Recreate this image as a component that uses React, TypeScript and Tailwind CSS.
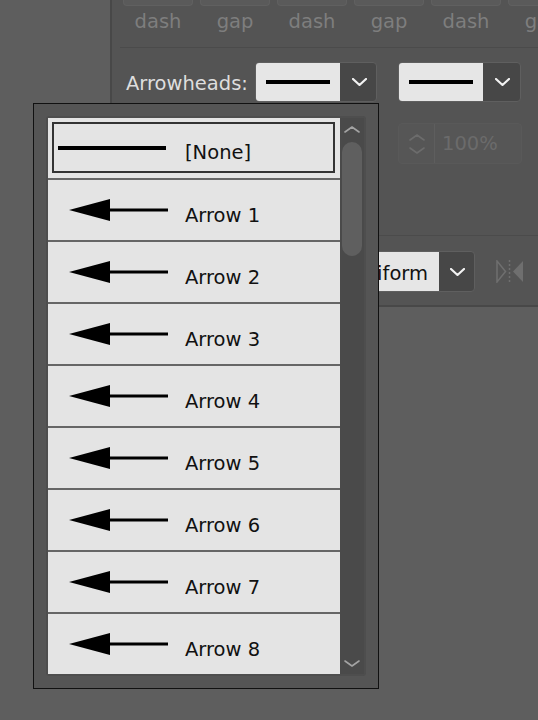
const labels = ["dash", "gap", "dash", "gap", "dash", "gap"];
const arrows = ["Arrow 1", "Arrow 2", "Arrow 3", "Arrow 4", "Arrow 5", "Arrow 6", "Arrow 7", "Arrow 8"];

function Chevron({ color, width = 16, height = 7, stroke = 2 }: { color: string; width?: number; height?: number; stroke?: number }) {
  return (
    <svg width={width} height={height} viewBox={`0 0 ${width} ${height}`}>
      <polyline
        points={`1,1 ${width / 2},${height - 1} ${width - 1},1`}
        fill="none"
        stroke={color}
        strokeWidth={stroke}
        strokeLinecap="round"
        strokeLinejoin="round"
      />
    </svg>
  );
}

function ChevronUp({ color }: { color: string }) {
  return (
    <svg width={16} height={7} viewBox="0 0 16 7">
      <polyline points="1,6 8,1 15,6" fill="none" stroke={color} strokeWidth={1.6} strokeLinecap="round" strokeLinejoin="round" />
    </svg>
  );
}

function LineSwatch({ width }: { width: number }) {
  return (
    <svg width={width} height={6} viewBox={`0 0 ${width} 6`}>
      <rect x={0} y={1} width={width} height={4} fill="#000" />
    </svg>
  );
}

function ArrowSwatch() {
  return (
    <svg width={100} height={24} viewBox="0 0 100 24" className="shrink-0">
      <polygon points="1,12 42,1 42,23" fill="#000" />
      <line x1={40} y1={12} x2={100} y2={12} stroke="#000" strokeWidth={3} />
    </svg>
  );
}

function Dropdown({ w }: { w: string }) {
  return (
    <div className={`${w} h-[40px] flex rounded-[4px] border border-[#5f5f5f] bg-[#474747] overflow-hidden`}>
      <div className="w-[84px] h-full bg-[#e6e6e6] flex items-center justify-center">
        <LineSwatch width={64} />
      </div>
      <div className="flex-1 flex items-center justify-center ml-[2px]">
        <Chevron color="#f2f2f2" width={15} height={8} stroke={2.2} />
      </div>
    </div>
  );
}

function MirrorIcon() {
  return (
    <svg width={28} height={23} viewBox="0 0 28 23">
      <polygon points="1,1 9.5,11.5 1,22" fill="none" stroke="#6f6f6f" strokeWidth={1.5} />
      <line x1={13.5} y1={0} x2={13.5} y2={23} stroke="#6f6f6f" strokeWidth={1.5} strokeDasharray="2 2" />
      <polygon points="27,1 17,11.5 27,22" fill="#6f6f6f" />
    </svg>
  );
}

export default function App() {
  return (
    <div className="relative w-[538px] h-[720px] overflow-hidden bg-[#5e5e5e] font-['DejaVu_Sans',Verdana,sans-serif]">
      {/* stroke panel behind */}
      <div className="ml-[110px] h-[307px] border-l-2 border-b-2 border-[#484848] bg-[#545454] pl-[11px] overflow-hidden">
        <div className="flex gap-[7px]">
          {labels.map((l, i) => (
            <div key={i} className="w-[70px] shrink-0 flex flex-col items-center">
              <div className="w-full h-[6px] rounded-b-[4px] border border-t-0 border-[#606060] bg-[#5a5a5a]" />
              <span className="mt-[4px] text-[19.5px] leading-[24px] text-[#7e7e7e]">{l}</span>
            </div>
          ))}
        </div>
        <div className="mt-[13px] -ml-[3px] h-px bg-[#4b4b4b]" />
        <div className="mt-[14px] flex items-center h-[40px] pl-[3px]">
          <span className="w-[129px] shrink-0 pt-[4px] text-[19.5px] leading-[24px] text-[#dedede]">Arrowheads:</span>
          <Dropdown w="w-[122px] shrink-0" />
          <div className="ml-[21px] shrink-0">
            <Dropdown w="w-[123px]" />
          </div>
        </div>
        <div className="mt-[21px] ml-[275px] w-[124px] h-[41px] flex rounded-[4px] border border-[#595959] bg-[#565656]">
          <div className="w-[36px] flex flex-col items-center justify-center gap-[6px] border-r border-[#5e5e5e]">
            <ChevronUp color="#6c6c6c" />
            <Chevron color="#6c6c6c" stroke={1.6} />
          </div>
          <span className="pl-[7px] flex items-center text-[19.5px] leading-[24px] text-[#6b6b6b]">100%</span>
        </div>
        <div className="mt-[71px] -ml-[3px] h-px bg-[#4b4b4b]" />
        <div className="mt-[15px] flex items-center">
          <div className="ml-[220px] w-[132px] h-[41px] shrink-0 flex rounded-[4px] border border-[#5f5f5f] bg-[#474747] overflow-hidden">
            <div className="w-[95px] h-full bg-[#e6e6e6] flex items-center justify-end pr-[11px]">
              <span className="pt-[4px] text-[19.5px] leading-[24px] text-[#111] whitespace-nowrap">Uniform</span>
            </div>
            <div className="flex-1 flex items-center justify-center ml-[2px]">
              <Chevron color="#f2f2f2" width={15} height={8} stroke={2.2} />
            </div>
          </div>
          <div className="ml-[21px] shrink-0">
            <MirrorIcon />
          </div>
        </div>
      </div>

      {/* arrowhead popup list */}
      <div className="absolute left-[33px] top-[103px] w-[346px] h-[586px] border border-[#111] bg-[#555555] p-[12px]">
        <div className="flex h-[560px] rounded-[3px] border-2 border-[#4e4e4e] bg-[#4a4a4a]">
          <div className="w-[292px] flex flex-col bg-[#e4e4e4]">
            <div className="h-[60px] shrink-0 pl-[4px] pt-[4px] pr-[5px] pb-[5px] flex">
              <div className="flex-1 flex items-center border-2 border-[#333] pl-[4px]">
                <LineSwatch width={108} />
                <span className="ml-[19px] pt-[11px] text-[19.5px] leading-[24px] text-[#111]">[None]</span>
              </div>
            </div>
            {arrows.map((a) => (
              <div key={a} className="h-[62px] shrink-0 border-t-2 border-[#666] flex items-center pl-[20px]">
                <ArrowSwatch />
                <span className="ml-[17px] pt-[11px] text-[19.5px] leading-[24px] text-[#111]">{a}</span>
              </div>
            ))}
          </div>
          <div className="w-[24px] flex flex-col items-center pt-[8px] pb-[7px]">
            <ChevronUp color="#a3a3a3" />
            <div className="mt-[9px] w-[20px] h-[114px] rounded-full bg-[#5f5f5f]" />
            <div className="flex-1" />
            <Chevron color="#a3a3a3" stroke={1.6} />
          </div>
        </div>
      </div>
    </div>
  );
}
